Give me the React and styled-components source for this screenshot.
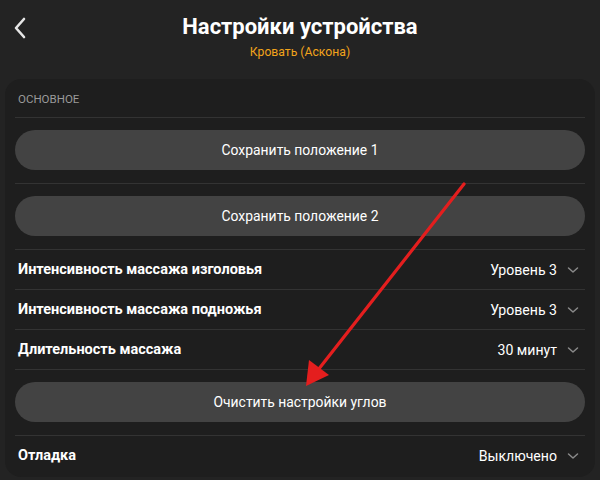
import React from "react";
import styled, { createGlobalStyle } from "styled-components";

const Global = createGlobalStyle`
  html, body { margin: 0; padding: 0; background: #232323; }
  body { font-family: Roboto, "Noto Sans", sans-serif; color: #fff; }
  * { box-sizing: border-box; }
`;

const Page = styled.div`
  position: relative;
  width: 600px;
  height: 480px;
  overflow: hidden;
  background: #232323;
  padding: 0 5px;
`;

const Header = styled.header`
  position: relative;
  display: flex;
  flex-direction: column;
  align-items: center;
  height: 79px;
  padding-top: 12px;
`;

const Back = styled.button`
  position: absolute;
  left: 3px;
  top: 16px;
  width: 24px;
  height: 24px;
  padding: 0;
  border: 0;
  background: none;
  display: flex;
  align-items: center;
  justify-content: center;
`;

const Title = styled.h1`
  margin: 0;
  font-size: 22px;
  line-height: 30px;
  font-weight: 700;
  color: #fff;
`;

const Subtitle = styled.div`
  margin-top: 2px;
  font-size: 12.2px;
  line-height: 16px;
  color: #f2a31b;
`;

const Card = styled.section`
  background: #1e1e1e;
  border-radius: 16px;
  padding: 0 10px 1px;
  height: 398px;
`;

const SectionLabel = styled.div`
  height: 38px;
  display: flex;
  align-items: center;
  padding-left: 3px;
  padding-top: 1px;
  font-size: 11.5px;
  color: #9a9a9a;
`;

const Item = styled.div`
  border-top: 1px solid #333;
`;

const ButtonItem = styled(Item)`
  padding: 12px 0 13px;
`;

const Pill = styled.button`
  width: 100%;
  height: 40px;
  border: 0;
  border-radius: 20px;
  background: #434343;
  color: #fff;
  font-family: Roboto, "Noto Sans", sans-serif;
  font-size: 13.9px;
`;

const SelectRow = styled(Item)`
  height: 40px;
  display: flex;
  align-items: center;
  justify-content: space-between;
  padding: 0 6px 0 3px;
`;

const Label = styled.span`
  font-size: 14.5px;
  font-weight: 700;
  color: #fff;
`;

const Value = styled.span`
  display: flex;
  align-items: center;
  gap: 10px;
  font-size: 14.1px;
  color: #fff;
`;

const Annotation = styled.svg`
  position: absolute;
  left: 0;
  top: 0;
  pointer-events: none;
`;

const Chevron = () => (
  <svg width="12" height="8" viewBox="0 0 12 8">
    <path d="M1.5 2 L6 6 L10.5 2" fill="none" stroke="#8a8a8a" strokeWidth="1.5" strokeLinecap="round" strokeLinejoin="round" />
  </svg>
);

const Select = ({ label, value }) => (
  <SelectRow>
    <Label>{label}</Label>
    <Value>
      {value}
      <Chevron />
    </Value>
  </SelectRow>
);

const Btn = ({ children }) => (
  <ButtonItem>
    <Pill>{children}</Pill>
  </ButtonItem>
);

export default function App() {
  return (
    <>
      <Global />
      <Page>
        <Header>
          <Back aria-label="Назад">
            <svg width="14" height="22" viewBox="0 0 14 22">
              <path d="M11 2 L3 11 L11 20" fill="none" stroke="#e6e6e6" strokeWidth="2.6" strokeLinecap="round" strokeLinejoin="round" />
            </svg>
          </Back>
          <Title>Настройки устройства</Title>
          <Subtitle>Кровать (Аскона)</Subtitle>
        </Header>
        <Card>
          <SectionLabel>ОСНОВНОЕ</SectionLabel>
          <Btn>Сохранить положение 1</Btn>
          <Btn>Сохранить положение 2</Btn>
          <Select label="Интенсивность массажа изголовья" value="Уровень 3" />
          <Select label="Интенсивность массажа подножья" value="Уровень 3" />
          <Select label="Длительность массажа" value="30 минут" />
          <Btn>Очистить настройки углов</Btn>
          <Select label="Отладка" value="Выключено" />
        </Card>
        <Annotation width="600" height="480" viewBox="0 0 600 480">
          <line x1="464" y1="184" x2="318" y2="370" stroke="#e41e1e" strokeWidth="3.2" strokeLinecap="round" />
          <polygon points="306,386 309,360 329,375" fill="#e41e1e" />
        </Annotation>
      </Page>
    </>
  );
}
